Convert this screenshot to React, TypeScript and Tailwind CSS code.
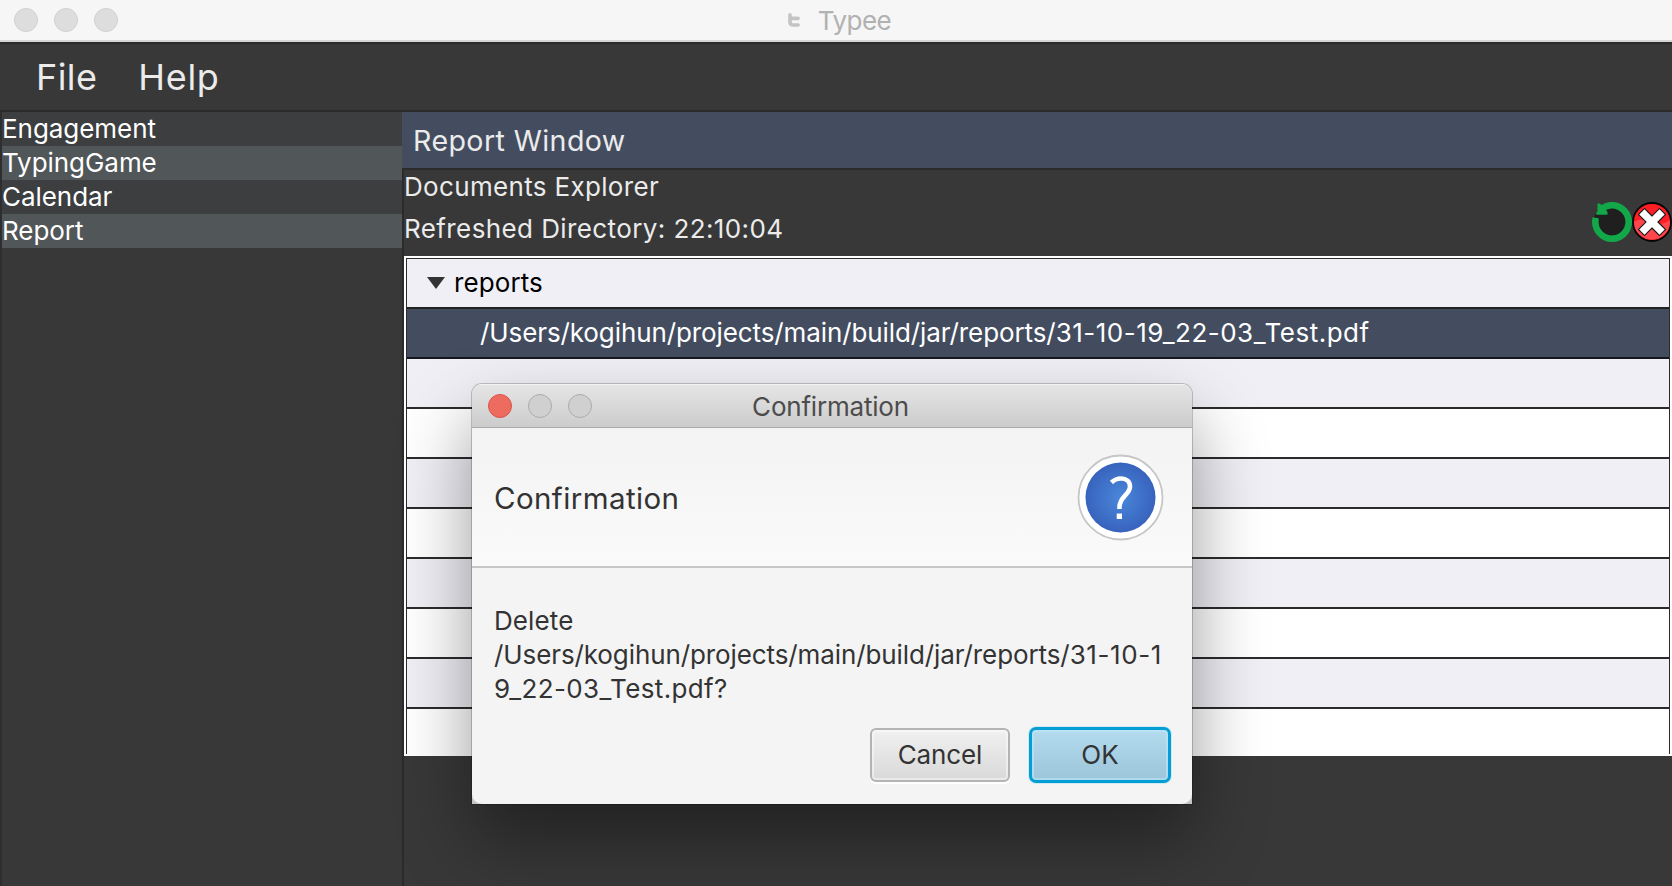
import React from "react";

const FILE_DIR = "/Users/kogihun/projects/main/build/jar/reports/";
const FILE_NAME = "31-10-19_22-03_Test.pdf";

const navItems = ["Engagement", "TypingGame", "Calendar", "Report"];

function TitleBar() {
  return (
    <header className="relative flex h-[42px] shrink-0 items-center justify-center border-b-2 border-[#d6d6d6] bg-[#f6f6f6] pl-[7px]">
      <div className="absolute left-[14px] top-[8px] flex gap-4">
        {[0, 1, 2].map((i) => (
          <span key={i} className="size-6 rounded-full border border-[#d0d0d0] bg-[#dddddd]" />
        ))}
      </div>
      <svg className="mr-[18px] h-[14px] w-[12px]" viewBox="0 0 12 14" fill="none" stroke="#c4c4c4" strokeWidth="3.6" strokeLinecap="round" strokeLinejoin="round">
        <path d="M2 1.9V9.2Q2 12 4.8 12H10.1M2 5.4H10.1" />
      </svg>
      <h1 className="pt-[2px] text-[26px] leading-[38px] tracking-[-0.5px] text-[#b1b1b1]">Typee</h1>
    </header>
  );
}

function MenuBar() {
  return (
    <nav className="flex h-[70px] shrink-0 items-center gap-[41px] border-y-2 border-[#2b2b2b] bg-[#383838] pl-[36px] text-[36px] leading-[44px] text-[#ebebeb]">
      <span className="tracking-[0.4px]">File</span>
      <span className="tracking-[0.7px]">Help</span>
    </nav>
  );
}

function SideBar() {
  return (
    <aside className="w-[402px] shrink-0 border-l-2 border-[#2e2e2e] bg-[#383838]">
      <ul>
        {navItems.map((item, i) => (
          <li
            key={item}
            className={`h-[34px] text-[26px] leading-[34px] tracking-[-0.05px] text-white ${i % 2 ? "bg-[#515658]" : "bg-[#3c3e3f]"}`}
          >
            {item}
          </li>
        ))}
      </ul>
    </aside>
  );
}

function RefreshIcon() {
  return (
    <svg width="40" height="40" viewBox="0 0 40 40">
      <circle cx="20" cy="20" r="18.5" fill="#1f1f1f" />
      <path d="M0.6 15.3L6.7 16.2V18.3A13.4 13.4 0 1 0 14 8L15.5 10V12.8H4.3V10.5L5.5 9V1.5H7.5L9.5 3A20 20 0 1 1 0.6 15.3Z" fill="#12a84a" />
    </svg>
  );
}

function CloseIcon() {
  return (
    <svg width="40" height="40" viewBox="0 0 40 40">
      <circle cx="20" cy="20" r="19" fill="#ff1f24" />
      <path d="M1 20Q10 15 20 20T39 17A19 19 0 0 1 1 20Z" fill="#ff474b" />
      <circle cx="20" cy="20" r="19" fill="none" stroke="#050505" strokeWidth="1.8" />
      <path d="M12.5 12.5L27.5 27.5M27.5 12.5L12.5 27.5" stroke="#1a1a1a" strokeWidth="9.6" strokeLinecap="square" />
      <path d="M12.5 12.5L27.5 27.5M27.5 12.5L12.5 27.5" stroke="#fff" strokeWidth="7.4" strokeLinecap="square" />
    </svg>
  );
}

function FileTree() {
  return (
    <div className="h-[500px] shrink-0 bg-white p-[2px]">
      <div className="h-[496px] overflow-hidden border-x border-t border-[#2b2b2b] text-[26px] leading-[34px]">
        <div className="flex h-[50px] items-center border-b-2 border-[#222222] bg-[#f0eff5] pl-[20px] text-black">
          <svg width="18" height="12" viewBox="0 0 18 12">
            <path d="M0 0H18L9 12Z" fill="#333" />
          </svg>
          <span className="pl-[9px] tracking-[0.1px]">reports</span>
        </div>
        <div className="flex h-[50px] items-center border-b-2 border-[#15181f] bg-[#434d5f] pl-[73px] text-white">
          <span className="tracking-[-0.1px]">{FILE_DIR}</span>
          <span className="tracking-[0.5px]">{FILE_NAME}</span>
        </div>
        {[0, 1, 2, 3, 4, 5, 6, 7].map((i) => (
          <div key={i} className={`h-[50px] border-b-2 border-[#2b2b2b] ${i % 2 ? "bg-white" : "bg-[#f0eff5]"}`} />
        ))}
      </div>
    </div>
  );
}

function ReportPane() {
  return (
    <main className="flex min-w-0 flex-1 flex-col">
      <h2 className="h-[56px] shrink-0 bg-[#434d5f] pl-[11px] text-[28.6px] leading-[58px] tracking-[0.4px] text-[#ebebeb]">
        Report Window
      </h2>
      <div className="flex min-h-0 flex-1 flex-col border-l-2 border-t-2 border-[#2b2b2b] bg-[#383838]">
        <div className="relative h-[86px] shrink-0 text-[26px] leading-[34px] text-[#ebebeb]">
          <p className="tracking-[0.33px]">Documents Explorer</p>
          <p className="mt-[8px] tracking-[0.4px]">Refreshed Directory: 22:10:04</p>
          <div className="absolute right-0 top-[32px] flex">
            <RefreshIcon />
            <CloseIcon />
          </div>
        </div>
        <FileTree />
      </div>
    </main>
  );
}

function Dialog() {
  return (
    <div className="absolute left-[472px] top-[384px] w-[720px] rounded-t-[10px] bg-[#c4c4c4] shadow-[0_0_0_1px_rgba(0,0,0,0.2),0_36px_72px_rgba(0,0,0,0.4)]">
      <div className="flex h-[420px] flex-col overflow-hidden rounded-[10px] bg-[#f4f4f4] text-[#333333]">
        <div className="relative flex h-[44px] shrink-0 items-center justify-center border-b border-t border-b-[#a9a9a9] border-t-[#f2f2f2] bg-linear-to-b from-[#e5e5e5] to-[#cccccc]">
          <div className="absolute left-[16px] top-[9px] flex gap-4">
            <span className="size-6 rounded-full border border-[#d9534a] bg-[#ee6b60]" />
            <span className="size-6 rounded-full border border-[#ababab] bg-[#d0d0d0]" />
            <span className="size-6 rounded-full border border-[#ababab] bg-[#d0d0d0]" />
          </div>
          <span className="pt-px pr-[3px] text-[26px] leading-[34px] tracking-[-0.2px] text-[#4c4c4c]">Confirmation</span>
        </div>
        <div className="flex h-[140px] shrink-0 items-center justify-between border-b-2 border-[#c6c6c6] bg-linear-to-b from-[#f3f3f3] to-[#fafafa] pl-[22px] pr-[28px]">
          <span className="pt-[2px] text-[29.5px] leading-[36px] tracking-[0.4px]">Confirmation</span>
          <svg width="87" height="87" viewBox="0 0 87 87">
            <defs>
              <radialGradient id="help">
                <stop offset="0" stopColor="#4a87db" />
                <stop offset="1" stopColor="#3863bd" />
              </radialGradient>
            </defs>
            <circle cx="43.5" cy="43.5" r="42" fill="#fff" stroke="#c6c6c6" strokeWidth="1.8" />
            <circle cx="43.5" cy="43.5" r="35" fill="url(#help)" />
            <path d="M34.5 28.5C37 26 40 24.5 44 24.5C49.5 24.5 53 27.5 53 32.5C53 41 42.5 42 42.5 53V55" fill="none" stroke="#fff" strokeWidth="4.6" />
            <path d="M39.7 59.5H45V65H39.7Z" fill="#fff" />
          </svg>
        </div>
        <p className="mt-[36px] h-[102px] shrink-0 pl-[22px] text-[26px] leading-[34px] tracking-[0.1px]">
          Delete
          <br />
          <span className="tracking-[-0.1px]">{FILE_DIR}</span>
          <span className="tracking-[0.6px]">31-10-1</span>
          <br />
          <span className="tracking-[0.35px]">9_22-03_Test.pdf?</span>
        </p>
        <div className="mt-[21px] flex items-center justify-end gap-[19px] pr-[21px] text-[26px]">
          <button className="h-[54px] w-[140px] rounded-[6px] border-2 border-[#b4b4b4] bg-linear-to-b from-[#f0f0f0] to-[#d9d9d9] leading-[50px] tracking-[-0.1px] shadow-[inset_0_0_0_2px_rgba(255,255,255,0.45),0_2px_0_#ffffff]">
            Cancel
          </button>
          <button className="h-[56px] w-[142px] rounded-[7px] border-3 border-[#039ed3] bg-linear-to-b from-[#b4dbee] to-[#9cc5da] leading-[50px] shadow-[inset_0_0_0_2px_rgba(190,235,252,0.55),0_0_0_1px_#d0e9f2]">
            OK
          </button>
        </div>
      </div>
    </div>
  );
}

export default function App() {
  return (
    <div className="relative flex h-[886px] w-[1672px] flex-col overflow-hidden bg-[#383838] font-['Inter',sans-serif]">
      <TitleBar />
      <MenuBar />
      <div className="flex min-h-0 flex-1">
        <SideBar />
        <ReportPane />
      </div>
      <Dialog />
    </div>
  );
}
